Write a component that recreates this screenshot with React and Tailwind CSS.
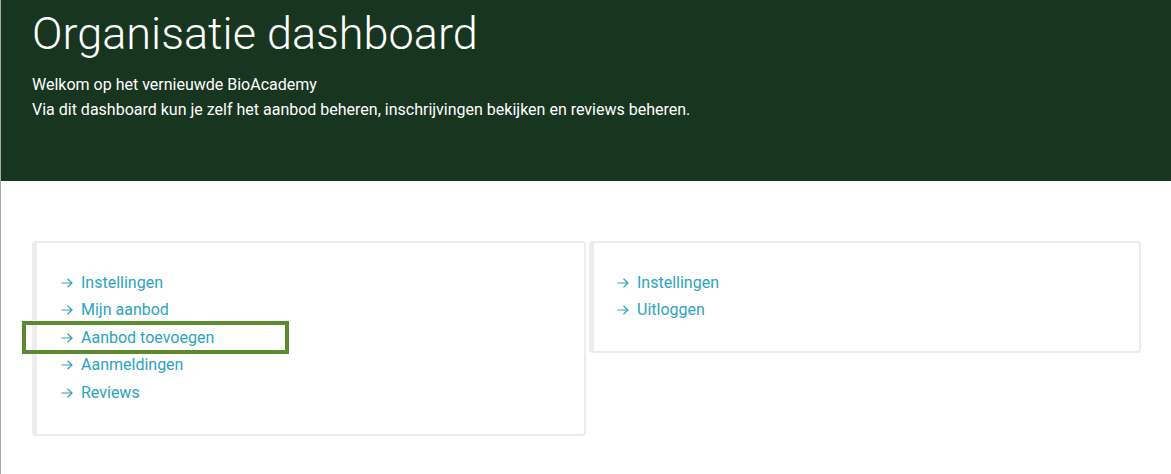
const adminLinks = ["Instellingen", "Mijn aanbod", "Aanbod toevoegen", "Aanmeldingen", "Reviews"];
const accountLinks = ["Instellingen", "Uitloggen"];

function LinkList({ items, highlight }) {
    return (
        <ul className="flex flex-col">
            {items.map((item) => (
                <li key={item} className="relative flex h-[27.5px] items-center gap-[8px] text-[16px] text-[#2ba4c1]">
                    {/* annotation box drawn over the row */}
                    {item === highlight && (
                        <span className="pointer-events-none absolute left-[-39px] top-[-3px] h-[33px] w-[267px] border-[4px] border-[#5c8b2f]"></span>
                    )}
                    <svg className="h-[10px] w-[12px]" viewBox="0 0 12 10" fill="none" stroke="currentColor" strokeWidth="1.2">
                        <path d="M0.5 5h10.5M6.5 0.8L11 5l-4.5 4.2" />
                    </svg>
                    <a href="#" className="leading-none">{item}</a>
                </li>
            ))}
        </ul>
    );
}

export default function App() {
    return (
        <div className="min-h-[474px] border-l border-[#a8a8a8] bg-white font-['Roboto','Liberation_Sans',sans-serif]">
            {/* Header */}
            <header className="h-[181px] bg-[#183520] px-[31px] pt-[6px] text-white">
                <h1 className="text-[45px] font-light leading-[56px]">Organisatie dashboard</h1>
                <div className="mt-[10px] text-[16px] leading-[25px]">
                    <p>Welkom op het vernieuwde BioAcademy</p>
                    <p>Via dit dashboard kun je zelf het aanbod beheren, inschrijvingen bekijken en reviews beheren.</p>
                </div>
            </header>

            {/* Cards */}
            <div className="flex items-start gap-[3px] pl-[31px] pt-[60px]">
                <div className="w-[554px] rounded-[4px] border-2 border-l-[5px] border-[#eeece8] pb-[27px] pl-[24px] pt-[26px]">
                    <LinkList items={adminLinks} highlight="Aanbod toevoegen" />
                </div>
                <div className="w-[552px] rounded-[4px] border-2 border-l-[5px] border-[#eeece8] pb-[27px] pl-[23px] pt-[26px]">
                    <LinkList items={accountLinks} />
                </div>
            </div>
        </div>
    );
}
